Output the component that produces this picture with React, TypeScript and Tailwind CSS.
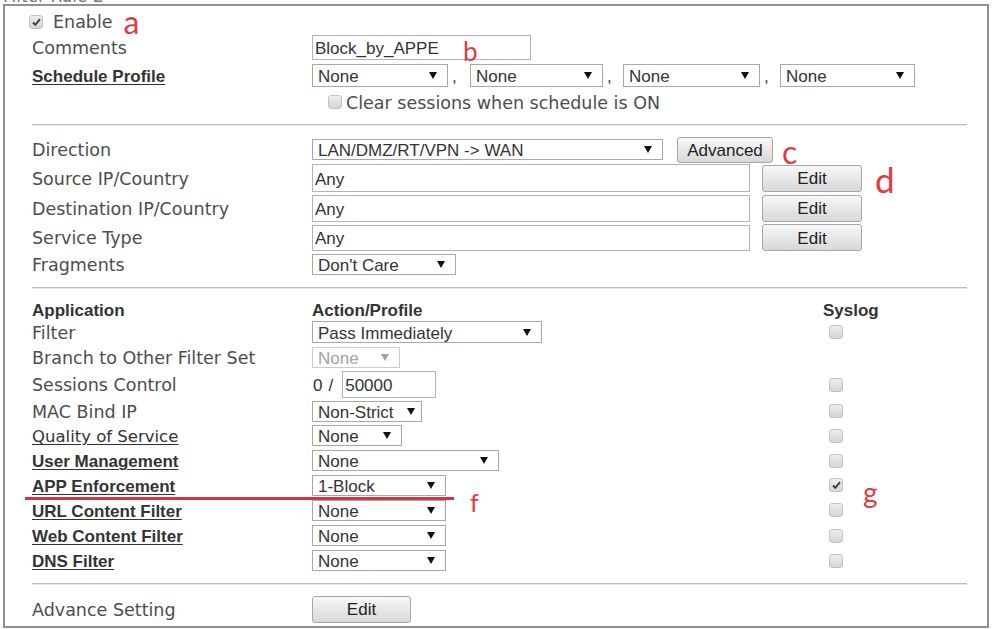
import React from "react";

const sans = "font-['DejaVu_Sans',sans-serif]";
const arial = "font-['Liberation_Sans',Arial,sans-serif]";
const note = "font-['Lato',sans-serif] text-[#e23b44] leading-none";

function Arrow({ muted }: { muted?: boolean }) {
  return (
    <svg width="8" height="7" viewBox="0 0 8 7" className="shrink-0">
      <path d="M0 0h8L4 7z" fill={muted ? "#a0a0a0" : "#111"} />
    </svg>
  );
}

function Select({ value, className, muted }: { value: string; className: string; muted?: boolean }) {
  return (
    <div
      className={`flex shrink-0 items-center justify-between border bg-white pl-[5px] pr-[10px] text-[17px] leading-none ${arial} ${
        muted ? "border-[#cbcbcb] text-[#a3a3a3]" : "border-[#a8a8a8] text-[#333]"
      } ${className}`}
    >
      <span className="pt-[2px]">{value}</span>
      <Arrow muted={muted} />
    </div>
  );
}

function Field({ value, className }: { value: string; className: string }) {
  return (
    <div className={`flex shrink-0 items-center border border-[#b3b3b3] bg-white pl-[2px] pt-[2px] text-[17px] leading-none text-[#333] ${arial} ${className}`}>
      {value}
    </div>
  );
}

function Button({ label, className }: { label: string; className: string }) {
  return (
    <div
      className={`flex shrink-0 items-center justify-center rounded-[3px] border border-[#a6a6a6] bg-linear-to-b from-[#f8f8f8] to-[#d8d8d8] pt-[1px] text-[17px] leading-none text-[#222] ${arial} ${className}`}
    >
      {label}
    </div>
  );
}

function Check({ on }: { on?: boolean }) {
  return (
    <div className="grid h-[14px] w-[14px] shrink-0 place-items-center rounded-[3px] border border-[#c2c2c2] bg-linear-to-b from-[#eeeeee] to-[#d5d5d5]">
      {on && (
        <svg width="9" height="8" viewBox="0 0 9 8">
          <path d="M1 4.5l2.3 2.3L8 1.2" stroke="#3a3a3a" strokeWidth="1.9" fill="none" />
        </svg>
      )}
    </div>
  );
}

function Label({ children }: { children: React.ReactNode }) {
  return <div className={`w-[280px] shrink-0 pt-[3px] text-[17.5px] leading-none text-[#4d4d4d] ${sans}`}>{children}</div>;
}

function LinkLabel({ children }: { children: React.ReactNode }) {
  return (
    <div className={`w-[280px] shrink-0 pt-[2px] text-[17px] font-bold leading-none text-[#333] underline decoration-1 underline-offset-2 ${arial}`}>
      {children}
    </div>
  );
}

function Divider({ className }: { className: string }) {
  return (
    <div className={className}>
      <div className="h-[2px] w-[935px] border-t border-b border-t-[#bfbfbf] border-b-[#e6e6e6]" />
    </div>
  );
}

function AppRow({
  h,
  label,
  children,
  syslog,
  extra,
}: {
  h: string;
  label: React.ReactNode;
  children: React.ReactNode;
  syslog?: "off" | "on";
  extra?: React.ReactNode;
}) {
  return (
    <div className={`relative flex items-center ${h}`}>
      {label}
      <div className="flex w-[511px] shrink-0 items-center">{children}</div>
      <div className="flex items-center pl-[6px]">
        {syslog && <Check on={syslog === "on"} />}
      </div>
      {extra}
    </div>
  );
}

export default function App() {
  return (
    <div className="h-[629px] w-[992px] overflow-hidden bg-white">
      <div className="h-[4px] overflow-hidden">
        <div className={`-mt-[16px] pl-[3px] text-[17px] text-[#777] ${sans}`}>Filter Rule 2</div>
      </div>

      <div className="ml-[3px] h-[624px] w-[986px] border-2 border-[#909090] pl-[27px] pt-[4px]">
        {/* general */}
        <div className="flex h-[23px] items-center">
          <div className="-ml-[3px]">
            <Check on />
          </div>
          <span className={`ml-[10px] pt-[3px] text-[17.5px] leading-none text-[#4d4d4d] ${sans}`}>Enable</span>
          <span className={`relative top-[0px] ml-[11px] text-[32px] ${note}`}>a</span>
        </div>

        <div className="flex h-[29px] items-center">
          <Label>Comments</Label>
          <div className="relative">
            <Field value="Block_by_APPE" className="h-[25px] w-[219px]" />
            <span className={`absolute left-[151px] top-[3px] text-[26px] ${note}`}>b</span>
          </div>
        </div>

        <div className="flex h-[27px] items-center">
          <LinkLabel>Schedule Profile</LinkLabel>
          <Select value="None" className="h-[23px] w-[136px]" />
          <span className={`w-[22px] self-end pl-[4px] text-[17px] text-[#333] ${arial}`}>,</span>
          <Select value="None" className="h-[23px] w-[133px]" />
          <span className={`w-[20px] self-end pl-[4px] text-[17px] text-[#333] ${arial}`}>,</span>
          <Select value="None" className="h-[23px] w-[137px]" />
          <span className={`w-[20px] self-end pl-[4px] text-[17px] text-[#333] ${arial}`}>,</span>
          <Select value="None" className="h-[23px] w-[135px]" />
        </div>

        <div className="flex h-[26px] items-center">
          <div className="w-[280px] shrink-0" />
          <div className="ml-[16px]">
            <Check />
          </div>
          <span className={`ml-[4px] pt-[3px] text-[17.5px] leading-none text-[#4d4d4d] ${sans}`}>Clear sessions when schedule is ON</span>
        </div>

        <Divider className="h-[21px] pt-[9px]" />

        {/* addresses */}
        <div className="flex h-[27px] items-center">
          <Label>Direction</Label>
          <Select value="LAN/DMZ/RT/VPN -> WAN" className="h-[21px] w-[351px]" />
          <Button label="Advanced" className="ml-[14px] h-[26px] w-[96px]" />
          <span className={`relative top-[2px] ml-[9px] text-[32px] ${note}`}>c</span>
        </div>

        <div className="flex h-[30px] items-center">
          <Label>Source IP/Country</Label>
          <Field value="Any" className="h-[28px] w-[438px]" />
          <Button label="Edit" className="ml-[12px] h-[27px] w-[100px]" />
          <span className={`relative top-[1px] ml-[13px] text-[35px] ${note}`}>d</span>
        </div>

        <div className="flex h-[30px] items-center">
          <Label>Destination IP/Country</Label>
          <Field value="Any" className="h-[27px] w-[438px]" />
          <Button label="Edit" className="ml-[12px] h-[27px] w-[100px]" />
        </div>

        <div className="flex h-[29px] items-center">
          <Label>Service Type</Label>
          <Field value="Any" className="h-[26px] w-[438px]" />
          <Button label="Edit" className="ml-[12px] h-[27px] w-[100px]" />
        </div>

        <div className="flex h-[25px] items-center">
          <Label>Fragments</Label>
          <Select value="Don't Care" className="h-[21px] w-[144px]" />
        </div>

        <Divider className="h-[23px] pt-[10px]" />

        {/* application */}
        <div className={`flex h-[19px] items-center pt-[2px] text-[17px] font-bold leading-none text-[#333] ${arial}`}>
          <div className="w-[280px] shrink-0">Application</div>
          <div className="w-[511px] shrink-0">Action/Profile</div>
          <div>Syslog</div>
        </div>

        <AppRow h="h-[26px]" label={<Label>Filter</Label>} syslog="off">
          <Select value="Pass Immediately" className="h-[22px] w-[230px]" />
        </AppRow>

        <AppRow h="h-[25px]" label={<Label>Branch to Other Filter Set</Label>}>
          <Select value="None" muted className="h-[21px] w-[88px]" />
        </AppRow>

        <AppRow h="h-[29px]" label={<Label>Sessions Control</Label>} syslog="off">
          <span className={`pl-[1px] pt-[2px] text-[17px] text-[#333] ${arial}`}>0</span>
          <span className={`ml-[6px] pt-[2px] text-[17px] text-[#333] ${arial}`}>/</span>
          <Field value="50000" className="ml-[9px] h-[27px] w-[94px]" />
        </AppRow>

        <AppRow h="h-[24px]" label={<Label>MAC Bind IP</Label>} syslog="off">
          <Select value="Non-Strict" className="h-[21px] w-[110px] !pr-[6px]" />
        </AppRow>

        <AppRow
          h="h-[25px]"
          label={
            <div className={`w-[280px] shrink-0 pt-[3px] text-[16.5px] leading-none text-[#333] underline decoration-1 underline-offset-2 ${sans}`}>
              Quality of Service
            </div>
          }
          syslog="off"
        >
          <Select value="None" className="h-[21px] w-[90px]" />
        </AppRow>

        <AppRow h="h-[25px]" label={<LinkLabel>User Management</LinkLabel>} syslog="off">
          <Select value="None" className="h-[21px] w-[187px]" />
        </AppRow>

        <AppRow
          h="h-[24px]"
          label={<LinkLabel>APP Enforcement</LinkLabel>}
          syslog="on"
          extra={
            <>
              <div className="absolute -left-[7px] top-[24px] h-[3px] w-[429px] bg-[#d8333d]" />
              <span className={`absolute left-[438px] top-[17px] text-[25px] ${note}`}>f</span>
              <span className={`absolute left-[831px] top-[5px] text-[28px] ${note}`}>g</span>
            </>
          }
        >
          <Select value="1-Block" className="h-[21px] w-[134px]" />
        </AppRow>

        <AppRow h="h-[26px]" label={<LinkLabel>URL Content Filter</LinkLabel>} syslog="off">
          <Select value="None" className="h-[21px] w-[134px]" />
        </AppRow>

        <AppRow h="h-[25px]" label={<LinkLabel>Web Content Filter</LinkLabel>} syslog="off">
          <Select value="None" className="h-[21px] w-[134px]" />
        </AppRow>

        <AppRow h="h-[25px]" label={<LinkLabel>DNS Filter</LinkLabel>} syslog="off">
          <Select value="None" className="h-[21px] w-[134px]" />
        </AppRow>

        <Divider className="h-[22px] pt-[10px]" />

        <div className="flex h-[28px] items-center">
          <Label>Advance Setting</Label>
          <Button label="Edit" className="h-[27px] w-[99px]" />
        </div>
      </div>
    </div>
  );
}
